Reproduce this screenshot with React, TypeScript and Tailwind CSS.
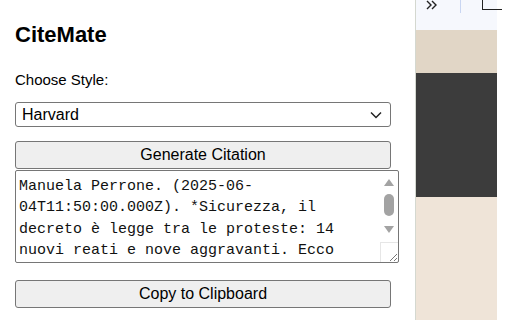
import React from 'react';

const lines = [
  'Manuela Perrone. (2025-06-',
  '04T11:50:00.000Z). *Sicurezza, il',
  'decreto è legge tra le proteste: 14',
  'nuovi reati e nove aggravanti. Ecco',
];

const FakeTextarea: React.FC = () => {
  return (
    <div className="flex h-[93px] w-[384px] overflow-hidden rounded-[2px] border border-[#767676] bg-white">
      <div className="flex-1 overflow-hidden pl-[3px] pt-[5px] font-['Liberation_Mono',monospace] text-[15px] leading-[21.3px] text-[#111]">
        {lines.map((l) => (
          <div key={l} className="whitespace-pre">{l}</div>
        ))}
      </div>
      <div className="flex w-[18px] flex-col items-center">
        <svg width="12" height="10" viewBox="0 0 12 10" className="mt-[6px]">
          <path d="M1 9 L6 2 L11 9 Z" fill="#a3a3a3" />
        </svg>
        <div className="mt-[7px] h-[22px] w-[10px] rounded-full bg-[#a3a3a3]" />
        <svg width="12" height="10" viewBox="0 0 12 10" className="mt-[9px]">
          <path d="M1 1 L6 8 L11 1 Z" fill="#a3a3a3" />
        </svg>
        <div className="mt-auto flex h-[20px] w-[18px] items-end justify-end border-l border-t border-[#e6e6e6]">
          <svg width="10" height="10" viewBox="0 0 10 10">
            <path d="M9 2 L2 9 M9 6 L6 9" stroke="#777" strokeWidth="1" />
          </svg>
        </div>
      </div>
    </div>
  );
};

const App: React.FC = () => {
  return (
    <div className="flex h-[320px] w-[512px] overflow-hidden bg-white font-['Liberation_Sans',Arial,sans-serif] text-black">
      <div className="w-[415px] pl-[15px] pt-[24px]">
        <h2 className="text-[22px] font-bold leading-[22px]">CiteMate</h2>
        <p className="mt-[25px] text-[15px] leading-[17px]">Choose Style:</p>
        <div className="mt-[14px] flex h-[25px] w-[376px] items-center justify-between rounded-[3px] border border-[#767676] px-[6px]">
          <span className="text-[16px] leading-none">Harvard</span>
          <svg width="12" height="8" viewBox="0 0 12 8" className="mr-[2px]">
            <path d="M1 1.5 L6 6.5 L11 1.5" fill="none" stroke="#222" strokeWidth="1.5" />
          </svg>
        </div>
        <button className="mt-[14px] flex h-[28px] w-[376px] items-center justify-center rounded-[3px] border border-[#767676] bg-[#efefef] text-[16px] leading-none">
          Generate Citation
        </button>
        <div className="mt-[1px]">
          <FakeTextarea />
        </div>
        <button className="mt-[17px] flex h-[28px] w-[376px] items-center justify-center rounded-[3px] border border-[#767676] bg-[#efefef] text-[16px] leading-none">
          Copy to Clipboard
        </button>
      </div>
      <div className="flex w-[82px] flex-col border-l border-[#d4d8d0]">
        <div className="relative h-[30px] bg-[#f6f8fd]">
          {/* toolbar overflow chevrons */}
          <svg width="12" height="10" viewBox="0 0 12 10" className="absolute left-[10px] top-0">
            <path d="M1 1 L5 5 L1 9 M6 1 L10 5 L6 9" fill="none" stroke="#222" strokeWidth="1.4" />
          </svg>
          <div className="absolute left-[44px] top-0 h-[13px] w-[1px] bg-[#c9d6f2]" />
          <div className="absolute left-[66px] top-[-2px] h-[12px] w-[20px] border-b-[1.5px] border-l-[1.5px] border-[#222]" />
        </div>
        <div className="h-[43px] bg-[#e1d6c6]" />
        <div className="h-[124px] bg-[#3c3c3c]" />
        <div className="flex-1 bg-[#efe4d8]" />
      </div>
      <div className="flex-1 bg-white" />
    </div>
  );
};

export default App;
